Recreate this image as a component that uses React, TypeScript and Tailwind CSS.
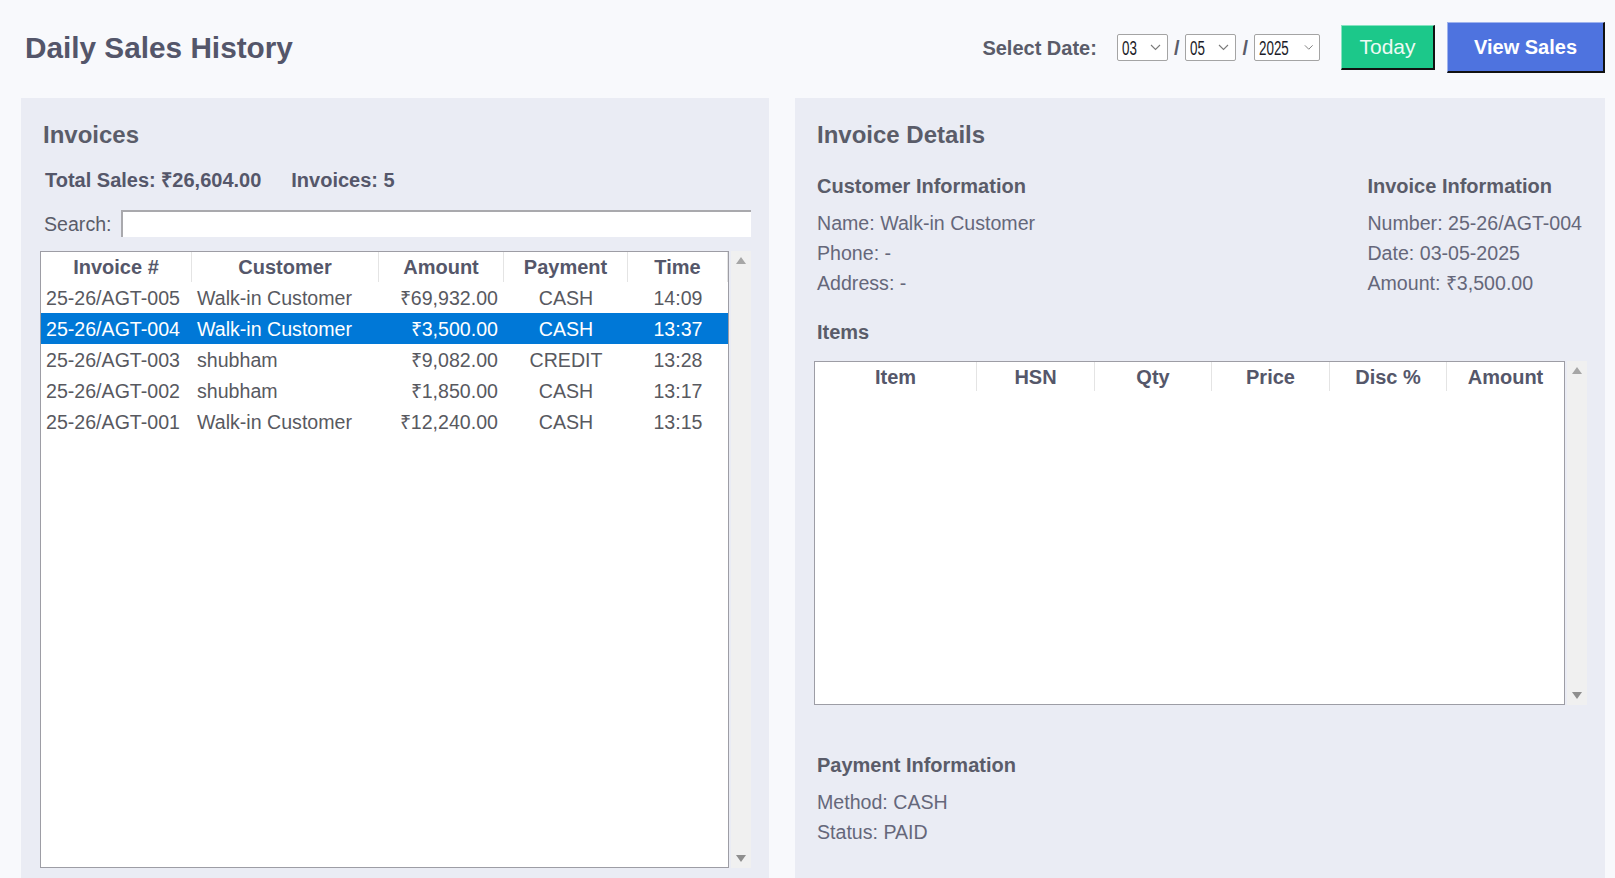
import React from "react";

const rows = [
  { inv: "25-26/AGT-005", cust: "Walk-in Customer", amt: "₹69,932.00", pay: "CASH", time: "14:09" },
  { inv: "25-26/AGT-004", cust: "Walk-in Customer", amt: "₹3,500.00", pay: "CASH", time: "13:37", sel: true },
  { inv: "25-26/AGT-003", cust: "shubham", amt: "₹9,082.00", pay: "CREDIT", time: "13:28" },
  { inv: "25-26/AGT-002", cust: "shubham", amt: "₹1,850.00", pay: "CASH", time: "13:17" },
  { inv: "25-26/AGT-001", cust: "Walk-in Customer", amt: "₹12,240.00", pay: "CASH", time: "13:15" },
];

function UpArrow() {
  return (
    <svg width="10" height="7" viewBox="0 0 10 7">
      <polygon points="5,0 10,7 0,7" fill="#a6a6a6" />
    </svg>
  );
}

function DownArrow() {
  return (
    <svg width="10" height="7" viewBox="0 0 10 7">
      <polygon points="0,0 10,0 5,7" fill="#8e8e8e" />
    </svg>
  );
}

function Scrollbar() {
  return (
    <div className="w-[20px] shrink-0 bg-[#f0f0f0] flex flex-col justify-between items-center pt-[6px] pb-[6px]">
      <UpArrow />
      <DownArrow />
    </div>
  );
}

function DateSelect({ value, wide }: { value: string; wide?: boolean }) {
  return (
    <div
      className={
        (wide ? "w-[66px]" : "w-[51px]") +
        " h-[27px] bg-white border border-[#a4a4a4] rounded-[2px] flex items-center justify-between pl-[4px] pr-[6px]"
      }
    >
      <span className="inline-block origin-left scale-x-[0.67] text-[20px] leading-[20px] text-[#1c1c28] font-normal">
        {value}
      </span>
      <svg width="11" height="7" viewBox="0 0 11 7">
        <polyline points="1,1 5.5,5.5 10,1" fill="none" stroke="#7a7a7a" strokeWidth="1.1" />
      </svg>
    </div>
  );
}

export default function App() {
  return (
    <div className="h-[878px] w-full overflow-hidden bg-[#f8f9fc] font-['Liberation_Sans',Arial,sans-serif] text-[#5a5c69] flex flex-col pl-[21px] pr-[10px] pt-[22px]">
      {/* Header */}
      <div className="h-[51px] shrink-0 flex items-center">
        <h1 className="pl-[4px] text-[29.75px] font-bold leading-[36px] text-[#54566a]">Daily Sales History</h1>
        <div className="ml-auto flex items-center">
          <span className="text-[20px] font-bold leading-[24px]">Select Date:</span>
          <div className="ml-[20px] flex items-center">
            <DateSelect value="03" />
            <span className="mx-[6px] text-[20px] font-bold leading-[24px] text-[#5a5c69]">/</span>
            <DateSelect value="05" />
            <span className="mx-[6px] text-[20px] font-bold leading-[24px] text-[#5a5c69]">/</span>
            <DateSelect value="2025" wide />
          </div>
          <button className="ml-[21px] w-[94px] h-[45px] bg-[#1cc88a] border-t border-l border-[#86e3c1] border-b-2 border-r-2 border-b-[#111] border-r-[#111] text-[21px] leading-[24px] text-[#eefaf4] font-normal flex items-center justify-center">
            Today
          </button>
          <button className="ml-[12px] w-[158px] h-[51px] bg-[#4e73df] border-t border-l border-[#9fb3ee] border-b-2 border-r-2 border-b-[#111] border-r-[#111] text-[20px] leading-[24px] text-white font-bold flex items-center justify-center">
            View Sales
          </button>
        </div>
      </div>

      {/* Panels */}
      <div className="mt-[25px] flex flex-1 min-h-0 gap-[26px]">
        {/* Left panel */}
        <div className="w-[748px] shrink-0 bg-[#eaecf4] flex flex-col pl-[19px] pr-[18px] pt-[23px] pb-[10px]">
          <h2 className="pl-[3px] text-[24px] font-bold leading-[28px]">Invoices</h2>
          <div className="mt-[19px] pl-[5px] flex gap-[30px] text-[20px] font-bold leading-[24px] text-[#55576a]">
            <span>Total Sales: ₹26,604.00</span>
            <span>Invoices: 5</span>
          </div>
          <div className="mt-[18px] h-[27px] flex items-center">
            <span className="w-[81px] shrink-0 pl-[4px] text-[19.6px] leading-[24px]">Search:</span>
            <div className="flex-1 h-[27px] bg-white border-t-2 border-l-2 border-[#a9a9ad]" />
          </div>
          <div className="mt-[14px] flex flex-1 min-h-0 gap-[2px]">
            <div className="flex-1 bg-white border border-[#9d9da5] flex flex-col text-[19.6px] leading-[24px] text-[#58595f]">
              <div className="flex h-[30px] shrink-0 text-[20px] font-bold text-[#55576a]">
                <div className="w-[151px] border-r border-[#e4e4e4] flex items-center justify-center">Invoice #</div>
                <div className="w-[187px] border-r border-[#e4e4e4] flex items-center justify-center">Customer</div>
                <div className="w-[125px] border-r border-[#e4e4e4] flex items-center justify-center">Amount</div>
                <div className="w-[124px] border-r border-[#e4e4e4] flex items-center justify-center">Payment</div>
                <div className="flex-1 border-r border-[#e4e4e4] flex items-center justify-center">Time</div>
              </div>
              {rows.map((r) => (
                <div
                  key={r.inv}
                  className={
                    "flex h-[31px] shrink-0 items-center whitespace-nowrap " +
                    (r.sel ? "bg-[#0078d7] text-white" : "")
                  }
                >
                  <div className="w-[151px] pl-[5px]">{r.inv}</div>
                  <div className="w-[187px] pl-[5px]">{r.cust}</div>
                  <div className="w-[125px] pr-[6px] text-right">{r.amt}</div>
                  <div className="w-[124px] text-center">{r.pay}</div>
                  <div className="flex-1 text-center">{r.time}</div>
                </div>
              ))}
            </div>
            <Scrollbar />
          </div>
        </div>

        {/* Right panel */}
        <div className="flex-1 bg-[#eaecf4] flex flex-col pl-[19px] pr-[18px] pt-[23px]">
          <h2 className="pl-[3px] text-[24px] font-bold leading-[28px]">Invoice Details</h2>
          <div className="mt-[25px] flex justify-between">
            <div className="pl-[3px]">
              <h3 className="text-[20px] font-bold leading-[24px]">Customer Information</h3>
              <div className="mt-[10px] text-[19.6px] leading-[30px] text-[#65677a]">
                <div>Name: Walk-in Customer</div>
                <div>Phone: -</div>
                <div>Address: -</div>
              </div>
            </div>
            <div className="pr-[5px]">
              <h3 className="text-[20px] font-bold leading-[24px]">Invoice Information</h3>
              <div className="mt-[10px] text-[19.6px] leading-[30px] text-[#65677a]">
                <div>Number: 25-26/AGT-004</div>
                <div>Date: 03-05-2025</div>
                <div>Amount: ₹3,500.00</div>
              </div>
            </div>
          </div>
          <h3 className="mt-[22px] pl-[3px] text-[20px] font-bold leading-[24px]">Items</h3>
          <div className="mt-[17px] h-[344px] shrink-0 flex gap-[2px]">
            <div className="flex-1 bg-white border border-[#9d9da5] flex flex-col text-[20px] leading-[24px]">
              <div className="flex h-[29px] shrink-0 font-bold text-[#55576a]">
                <div className="w-[162px] border-r border-[#e4e4e4] flex items-center justify-center">Item</div>
                <div className="w-[118px] border-r border-[#e4e4e4] flex items-center justify-center">HSN</div>
                <div className="w-[117px] border-r border-[#e4e4e4] flex items-center justify-center">Qty</div>
                <div className="w-[118px] border-r border-[#e4e4e4] flex items-center justify-center">Price</div>
                <div className="w-[117px] border-r border-[#e4e4e4] flex items-center justify-center">Disc %</div>
                <div className="flex-1 flex items-center justify-center">Amount</div>
              </div>
            </div>
            <Scrollbar />
          </div>
          <h3 className="mt-[48px] pl-[3px] text-[20px] font-bold leading-[24px]">Payment Information</h3>
          <div className="mt-[10px] pl-[3px] text-[19.6px] leading-[30px] text-[#65677a]">
            <div>Method: CASH</div>
            <div>Status: PAID</div>
          </div>
        </div>
      </div>
    </div>
  );
}
